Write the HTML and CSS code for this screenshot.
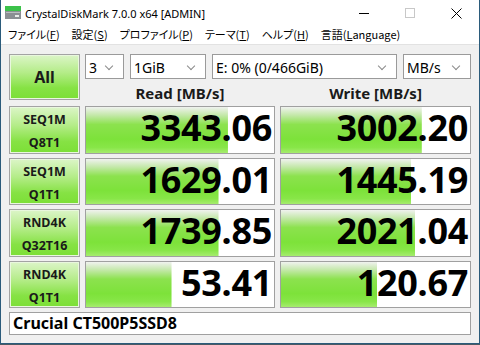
FILE: index.html
```html
<!DOCTYPE html>
<html lang="ja">
<head>
  <meta charset="UTF-8" />
  <title>CrystalDiskMark 7.0.0 x64 [ADMIN]</title>
  <link rel="stylesheet" href="styles.css">
</head>
<body>
  <div class="window">
    <div class="titlebar">
      <svg class="app-icon" width="16" height="14" viewBox="0 0 16 14">
        <rect x="0" y="0" width="16" height="5" fill="#3cc24a"/>
        <rect x="0" y="5" width="16" height="8" fill="#8a8f93"/>
        <rect x="1" y="6" width="14" height="1" fill="#b9bdc0"/>
        <rect x="10" y="9" width="4" height="2" fill="#e8ece8"/>
      </svg>
      <span class="title">CrystalDiskMark 7.0.0 x64 [ADMIN]</span>
      <div class="controls">
        <span class="ctl"><svg width="10" height="10" viewBox="0 0 10 10"><line x1="0" y1="5.5" x2="10" y2="5.5" stroke="#000" stroke-width="1"/></svg></span>
        <span class="ctl"><svg width="10" height="10" viewBox="0 0 10 10"><rect x="0.5" y="0.5" width="9" height="9" fill="none" stroke="#c8c8c8" stroke-width="1"/></svg></span>
        <span class="ctl"><svg width="11" height="11" viewBox="0 0 11 11"><path d="M0.5 0.5 L10.5 10.5 M10.5 0.5 L0.5 10.5" stroke="#000" stroke-width="1"/></svg></span>
      </div>
    </div>

    <div class="menubar">
      <span>ファイル(<u>F</u>)</span>
      <span>設定(<u>S</u>)</span>
      <span>プロファイル(<u>P</u>)</span>
      <span>テーマ(<u>T</u>)</span>
      <span>ヘルプ(<u>H</u>)</span>
      <span>言語(<u>L</u>anguage)</span>
    </div>

    <div class="bench">
      <div class="btn all">All</div>

      <div class="selects">
        <div class="combo w-count">3</div>
        <div class="combo w-size">1GiB</div>
        <div class="combo w-drive">E: 0% (0/466GiB)</div>
        <div class="combo w-unit">MB/s</div>
      </div>

      <div class="head">Read [MB/s]</div>
      <div class="head">Write [MB/s]</div>

      <div class="btn test">SEQ1M<br>Q8T1</div>
      <div class="result" style="background-size: 75.5% 100%">3343.06</div>
      <div class="result" style="background-size: 74.5% 100%">3002.20</div>

      <div class="btn test">SEQ1M<br>Q1T1</div>
      <div class="result" style="background-size: 70.5% 100%">1629.01</div>
      <div class="result" style="background-size: 69% 100%">1445.19</div>

      <div class="btn test">RND4K<br>Q32T16</div>
      <div class="result" style="background-size: 70.5% 100%">1739.85</div>
      <div class="result" style="background-size: 71% 100%">2021.04</div>

      <div class="btn test">RND4K<br>Q1T1</div>
      <div class="result" style="background-size: 45.5% 100%">53.41</div>
      <div class="result" style="background-size: 51% 100%">120.67</div>

      <div class="drive">Crucial CT500P5SSD8</div>
    </div>
  </div>
</body>
</html>
```

FILE: styles.css
```css
* {
  box-sizing: border-box;
}

body {
  margin: 0;
  background: #4a5a63;
  font-family: 'Noto Sans', 'Noto Sans CJK JP', sans-serif;
  color: #000;
}

.window {
  width: 480px;
  height: 344px;
  background: #f0f0f0;
  border: 1px solid #2b5b7b;
  border-top: none;
}

/* title bar */
.titlebar {
  height: 26px;
  background: #fff;
  display: flex;
  align-items: center;
  padding-left: 4px;
}

.app-icon {
  margin-top: -1px;
}

.title {
  margin-left: 4px;
  font-size: 11px;
  color: #000;
}

.controls {
  margin-left: auto;
  display: flex;
  height: 26px;
}

.ctl {
  width: 46px;
  display: flex;
  align-items: center;
  justify-content: center;
}

/* menu */
.menubar {
  height: 19px;
  background: #fff;
  border-bottom: 1px solid #e2e2e2;
  display: flex;
  gap: 12px;
  padding-left: 7px;
  font-family: 'Noto Sans CJK JP', sans-serif;
  font-feature-settings: "palt";
  font-size: 11px;
  line-height: 17px;
}

.menubar u {
  text-underline-offset: 1px;
}

/* benchmark grid */
.bench {
  display: grid;
  grid-template-columns: 71px 190px 191px;
  grid-template-rows: 25px 19px 48px 47px 48px 47px 23px;
  column-gap: 5px;
  row-gap: 4px;
  padding: 9px 7px 0 8px;
}

.btn {
  border: 1px solid #a3a3a3;
  box-shadow: inset 0 0 0 1px #e9f7de;
  background: linear-gradient(to bottom, #dcf5c8 0%, #b4ec88 40%, #86e244 75%, #7cdf36 100%);
  display: flex;
  align-items: center;
  justify-content: center;
  text-align: center;
  font-weight: 700;
  color: #1a1a1a;
}

.all {
  grid-row: 1 / 3;
  height: 46px;
  font-size: 16px;
}

.test {
  font-size: 12.5px;
  line-height: 23px;
  padding-top: 2px;
}

.selects {
  grid-column: 2 / 4;
  display: flex;
  justify-content: space-between;
}

.combo {
  position: relative;
  height: 25px;
  background: #fff;
  border: 1px solid #9a9a9a;
  font-size: 14px;
  line-height: 25px;
  padding-left: 3px;
  color: #000;
}

.combo::after {
  content: "";
  position: absolute;
  right: 11px;
  top: 8px;
  width: 5px;
  height: 5px;
  border-right: 1px solid #8a8a8a;
  border-bottom: 1px solid #8a8a8a;
  transform: rotate(45deg);
}

.w-count { width: 39px; }
.w-size { width: 76px; }
.w-drive { width: 185px; }
.w-unit { width: 68px; }

.head {
  text-align: center;
  font-size: 15px;
  font-weight: 700;
  line-height: 21px;
  color: #1a1a1a;
}

.result {
  border: 1px solid #a0a0a0;
  background-color: #fff;
  background-image: linear-gradient(to bottom, #f0f2ef 0%, #c3e8a8 18%, #8ce24e 38%, #7de23a 70%, #88e648 88%, #a6ec6e 100%);
  background-repeat: no-repeat;
  text-align: right;
  padding-right: 2px;
  font-size: 36px;
  font-weight: 700;
  line-height: 42px;
  letter-spacing: -0.3px;
}

.drive {
  grid-column: 1 / 4;
  background: #fff;
  border: 1px solid #a0a0a0;
  font-size: 16px;
  font-weight: 700;
  line-height: 21px;
  padding-left: 3px;
}
```
